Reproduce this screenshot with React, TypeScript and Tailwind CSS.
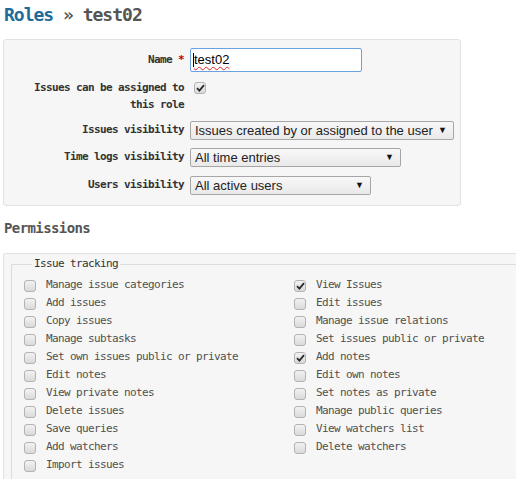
import React from 'react';

const mono = "font-['DejaVu_Sans_Mono',monospace]";

const leftPerms: [string, boolean][] = [
  ['Manage issue categories', false],
  ['Add issues', false],
  ['Copy issues', false],
  ['Manage subtasks', false],
  ['Set own issues public or private', false],
  ['Edit notes', false],
  ['View private notes', false],
  ['Delete issues', false],
  ['Save queries', false],
  ['Add watchers', false],
  ['Import issues', false],
];

const rightPerms: [string, boolean][] = [
  ['View Issues', true],
  ['Edit issues', false],
  ['Manage issue relations', false],
  ['Set issues public or private', false],
  ['Add notes', true],
  ['Edit own notes', false],
  ['Set notes as private', false],
  ['Manage public queries', false],
  ['View watchers list', false],
  ['Delete watchers', false],
];

function Check({ checked }: { checked: boolean }) {
  return (
    <span className="w-[12px] h-[12px] shrink-0 rounded-[3px] border border-[#b3b3b3] bg-gradient-to-b from-[#f2f2f2] to-[#dadada] flex items-center justify-center">
      {checked && (
        <svg width="9" height="8" viewBox="0 0 9 8">
          <path d="M1 4.2 L3.4 6.6 L8 1.2" fill="none" stroke="#2b2b2b" strokeWidth="1.8" />
        </svg>
      )}
    </span>
  );
}

function Select({ text, width }: { text: string; width: string }) {
  return (
    <div
      className={`${width} h-[19px] flex items-center justify-between pl-[4px] pr-[6px] border border-[#a6a6a6] rounded-[2px] bg-gradient-to-b from-[#f8f8f8] to-[#e9e9e9] font-['Liberation_Sans',Arial,sans-serif] text-[13px] tracking-normal text-[#222]`}
    >
      <span>{text}</span>
      <span className="text-[9px] text-[#111]">▼</span>
    </div>
  );
}

function PermRow({ label, checked }: { label: string; checked: boolean }) {
  return (
    <div className="h-[18px] flex items-center gap-[10px]">
      <Check checked={checked} />
      <span className="text-[#505050]">{label}</span>
    </div>
  );
}

export default function App() {
  return (
    <div className={`w-[516px] h-[496px] overflow-hidden bg-white ${mono} text-[11px] tracking-[-0.62px]`}>
      <h2 className="h-[39px] pl-[4px] pt-[2px] text-[18px] font-bold tracking-[-1px] leading-[26px]">
        <span className="text-[#1e6b99]">Roles</span>
        <span className="text-[#555]"> » test02</span>
      </h2>

      <div className="ml-[3px] w-[458px] h-[167px] border border-[#e2e2e2] rounded-[3px] bg-[#f6f6f6] pt-[8px]">
        <div className="flex items-center">
          <label className="w-[186px] pr-[6px] text-right font-bold text-[#333]">
            Name <span className="text-[#bb0000]">*</span>
          </label>
          <div className="w-[172px] h-[24px] border border-[#6aa1e0] rounded-[2px] bg-white flex items-center pl-[2px] font-['Liberation_Sans',Arial,sans-serif] text-[13px] tracking-normal text-black">
            <span className="w-px h-[14px] bg-black" />
            <span className="underline decoration-wavy decoration-[#e02020] decoration-1 underline-offset-2">test02</span>
          </div>
        </div>

        <div className="flex items-start mt-[7px] leading-[17px]">
          <label className="w-[186px] pr-[6px] text-right font-bold text-[#333]">
            Issues can be assigned to
            <br />
            this role
          </label>
          <div className="pt-[3px] pl-[4px]">
            <Check checked={true} />
          </div>
        </div>

        <div className="flex items-center mt-[8px]">
          <label className="w-[186px] pr-[6px] text-right font-bold text-[#333]">Issues visibility</label>
          <Select text="Issues created by or assigned to the user" width="w-[264px]" />
        </div>
        <div className="flex items-center mt-[8px]">
          <label className="w-[186px] pr-[6px] text-right font-bold text-[#333]">Time logs visibility</label>
          <Select text="All time entries" width="w-[211px]" />
        </div>
        <div className="flex items-center mt-[9px]">
          <label className="w-[186px] pr-[6px] text-right font-bold text-[#333]">Users visibility</label>
          <Select text="All active users" width="w-[181px]" />
        </div>
      </div>

      <h3 className="pl-[4px] mt-[13px] h-[34px] text-[14px] font-bold tracking-[-0.6px] text-[#555] leading-[18px]">
        Permissions
      </h3>

      <div className="ml-[3px] w-[560px] h-[226px] border border-b-0 border-[#e2e2e2] rounded-t-[3px] bg-[#f6f6f6] pt-[2px] pl-[7px]">
        <fieldset className="h-full border border-b-0 border-[#dcdcdc] pl-[12px] pt-[4px]">
          <legend className="px-[2px] ml-[8px] text-[#333]">Issue tracking</legend>
          <div className="grid grid-cols-[270px_270px]">
            <div className="flex flex-col">
              {leftPerms.map(([l, c]) => (
                <PermRow key={l} label={l} checked={c} />
              ))}
            </div>
            <div className="flex flex-col">
              {rightPerms.map(([l, c]) => (
                <PermRow key={l} label={l} checked={c} />
              ))}
            </div>
          </div>
        </fieldset>
      </div>
    </div>
  );
}
